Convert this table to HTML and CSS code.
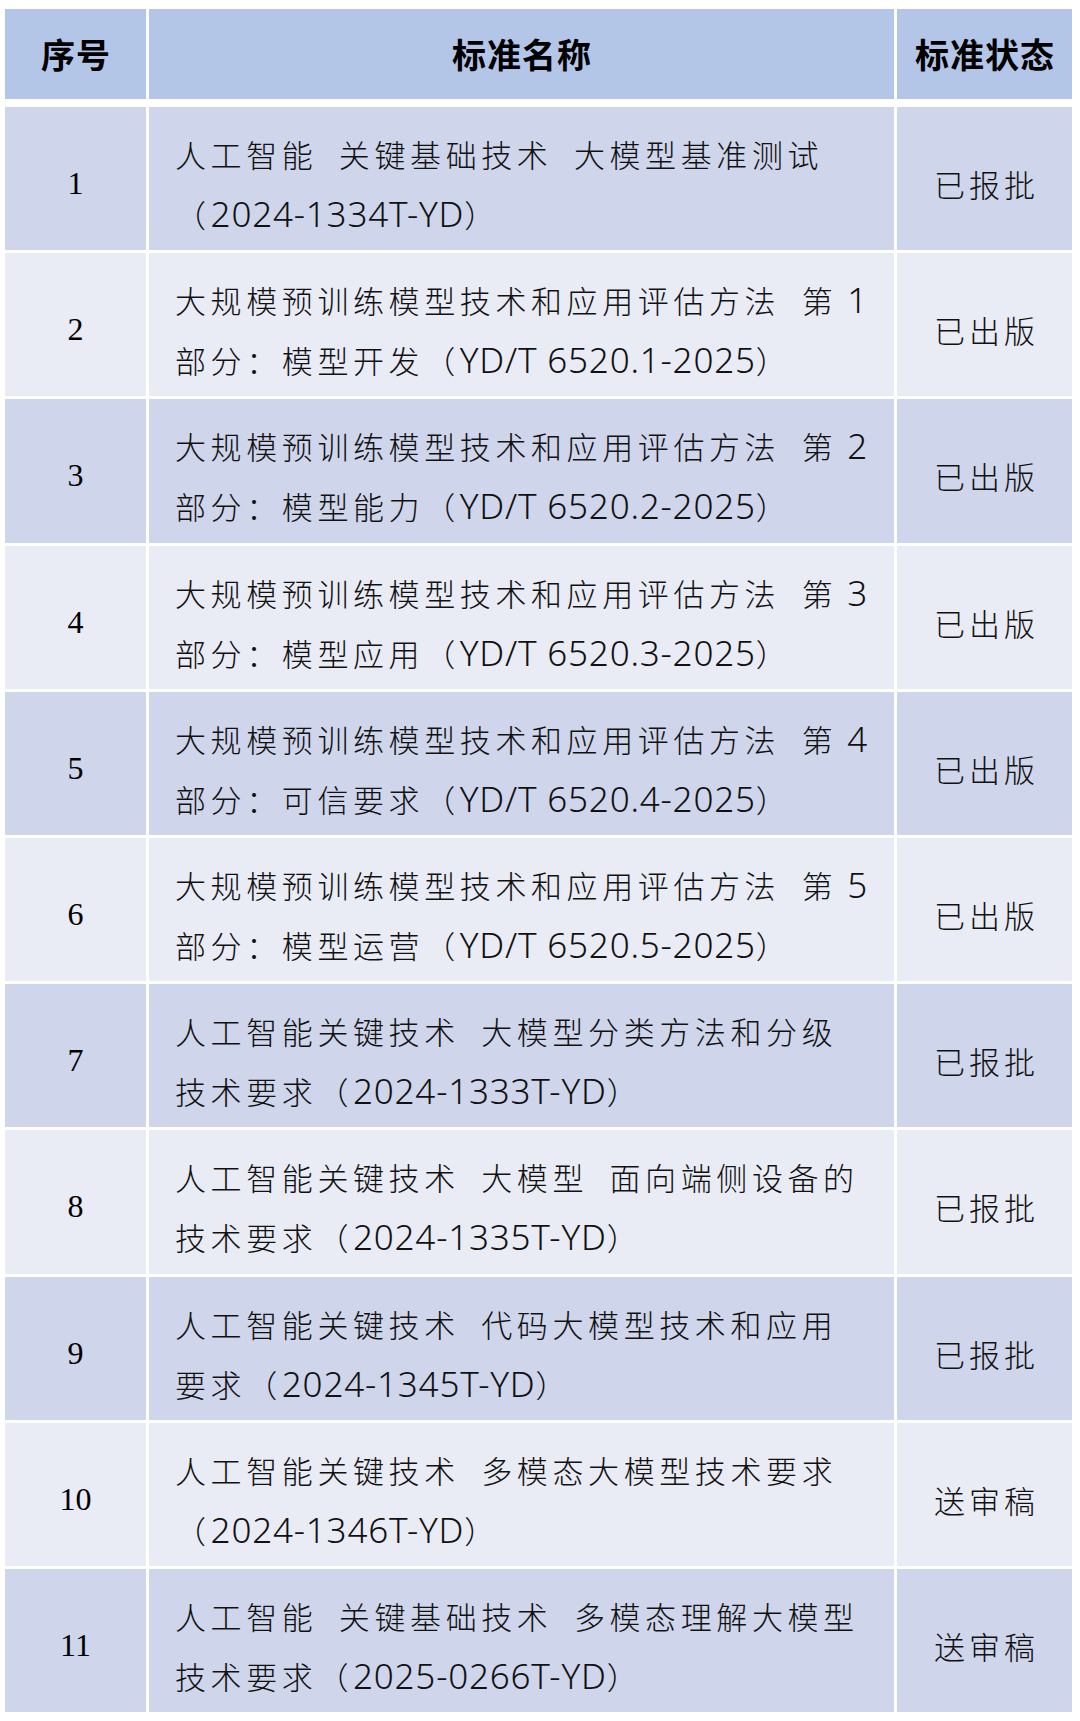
FILE: index.html
```html
<!DOCTYPE html>
<html lang="zh-CN">
<head>
<meta charset="utf-8">
<title>标准列表</title>
<link rel="stylesheet" href="styles.css">
</head>
<body>
<div class="table">
  <div class="row head">
    <div class="th">序号</div>
    <div class="th">标准名称</div>
    <div class="th">标准状态</div>
  </div>
  <div class="body">
    <div class="row odd">
      <div class="no">1</div>
      <div class="name">人工智能 关键基础技术 大模型基准测试<br>（<span class="code">2024-1334T-YD</span>）</div>
      <div class="status">已报批</div>
    </div>
    <div class="row even">
      <div class="no">2</div>
      <div class="name">大规模预训练模型技术和应用评估方法 第<span class="code"> 1</span><br>部分：模型开发（<span class="code">YD/T 6520.1-2025</span>）</div>
      <div class="status">已出版</div>
    </div>
    <div class="row odd">
      <div class="no">3</div>
      <div class="name">大规模预训练模型技术和应用评估方法 第<span class="code"> 2</span><br>部分：模型能力（<span class="code">YD/T 6520.2-2025</span>）</div>
      <div class="status">已出版</div>
    </div>
    <div class="row even">
      <div class="no">4</div>
      <div class="name">大规模预训练模型技术和应用评估方法 第<span class="code"> 3</span><br>部分：模型应用（<span class="code">YD/T 6520.3-2025</span>）</div>
      <div class="status">已出版</div>
    </div>
    <div class="row odd">
      <div class="no">5</div>
      <div class="name">大规模预训练模型技术和应用评估方法 第<span class="code"> 4</span><br>部分：可信要求（<span class="code">YD/T 6520.4-2025</span>）</div>
      <div class="status">已出版</div>
    </div>
    <div class="row even">
      <div class="no">6</div>
      <div class="name">大规模预训练模型技术和应用评估方法 第<span class="code"> 5</span><br>部分：模型运营（<span class="code">YD/T 6520.5-2025</span>）</div>
      <div class="status">已出版</div>
    </div>
    <div class="row odd">
      <div class="no">7</div>
      <div class="name">人工智能关键技术 大模型分类方法和分级<br>技术要求（<span class="code">2024-1333T-YD</span>）</div>
      <div class="status">已报批</div>
    </div>
    <div class="row even">
      <div class="no">8</div>
      <div class="name">人工智能关键技术 大模型 面向端侧设备的<br>技术要求（<span class="code">2024-1335T-YD</span>）</div>
      <div class="status">已报批</div>
    </div>
    <div class="row odd">
      <div class="no">9</div>
      <div class="name">人工智能关键技术 代码大模型技术和应用<br>要求（<span class="code">2024-1345T-YD</span>）</div>
      <div class="status">已报批</div>
    </div>
    <div class="row even">
      <div class="no">10</div>
      <div class="name">人工智能关键技术 多模态大模型技术要求<br>（<span class="code">2024-1346T-YD</span>）</div>
      <div class="status">送审稿</div>
    </div>
    <div class="row odd">
      <div class="no">11</div>
      <div class="name">人工智能 关键基础技术 多模态理解大模型<br>技术要求（<span class="code">2025-0266T-YD</span>）</div>
      <div class="status">送审稿</div>
    </div>
  </div>
</div>
</body>
</html>
```

FILE: styles.css
```css
html, body {
  margin: 0;
  padding: 0;
  background: #ffffff;
}

body {
  font-family: "Noto Sans CJK SC", "Noto Sans", sans-serif;
  color: #111111;
}

.table {
  margin: 9px 0 0 5px;
  width: 1067px;
}

.row {
  display: grid;
  grid-template-columns: 141px 745px 175px;
  column-gap: 3px;
}

.head {
  height: 90px;
  margin-bottom: 8px;
}

.th {
  background: #b4c6e7;
  display: flex;
  align-items: center;
  justify-content: center;
  font-weight: 700;
  font-size: 34px;
  letter-spacing: 1px;
  padding-left: 1px;
  padding-bottom: 2px;
  color: #000000;
}

.body {
  display: flex;
  flex-direction: column;
  gap: 3px;
}

.body .row {
  height: 143.2px;
}

.odd > div {
  background: #cfd5ea;
}

.even > div {
  background: #e9ebf5;
}

.no,
.status {
  display: flex;
  align-items: center;
  padding-top: 10px;
  box-sizing: border-box;
}

.no {
  justify-content: center;
  font-family: "Liberation Serif", "Times New Roman", serif;
  font-size: 32px;
  color: #000000;
}

.name {
  box-sizing: border-box;
  padding: 17px 0 0 26px;
  font-size: 31px;
  font-weight: 300;
  line-height: 60px;
  letter-spacing: 4.6px;
  word-spacing: 10px;
  white-space: nowrap;
}

.code {
  font-family: "Noto Sans", "Noto Sans CJK SC", sans-serif;
  font-size: 35px;
  letter-spacing: 0.8px;
  word-spacing: 0;
}

.status {
  justify-content: center;
  font-size: 31px;
  font-weight: 300;
  letter-spacing: 4px;
  padding-left: 4px;
}
```
